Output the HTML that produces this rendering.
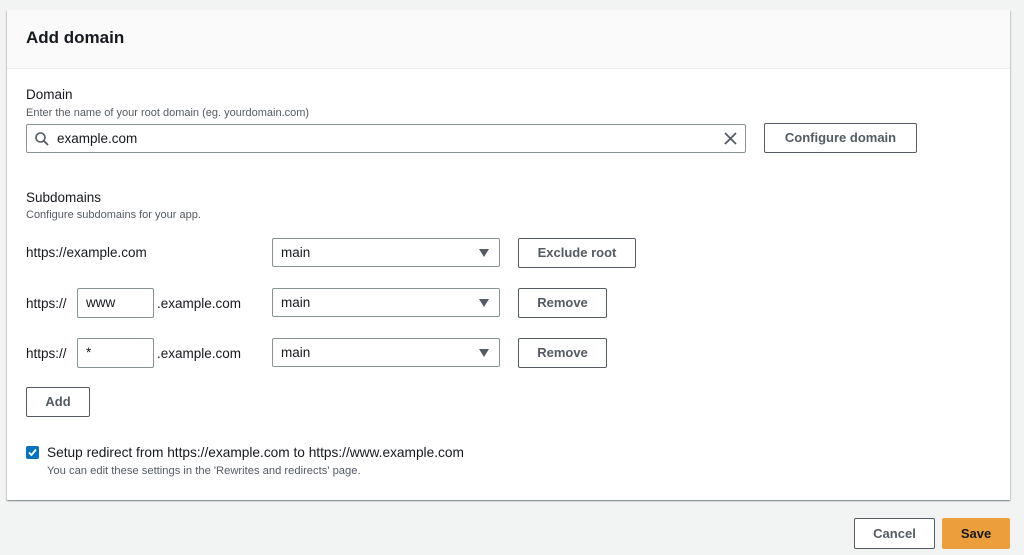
<!DOCTYPE html>
<html><head><style>
*{box-sizing:border-box;margin:0;padding:0}
body{width:1024px;height:555px;background:#f2f3f3;font-family:"Liberation Sans",Arial,sans-serif;color:#16191f;position:relative;overflow:hidden}
.card{position:absolute;left:7px;top:10px;width:1003px;height:490px;background:#fff;box-shadow:0 1px 1px 0 rgba(0,28,36,.3),1px 1px 1px 0 rgba(0,28,36,.15),-1px 1px 1px 0 rgba(0,28,36,.15)}
.hdr{height:59px;background:#fafafa;border-bottom:1px solid #eaeded;padding:18px 19px;font-size:17px;font-weight:bold}
.a{position:absolute}
.lbl{font-size:13.5px}
.desc{font-size:11px;color:#545b64}
.inp{position:absolute;border:1px solid #879596;border-radius:2px;height:29px;font-size:13.5px;padding:6px 8px;background:#fff}
.btn{position:absolute;border:1px solid #545b64;border-radius:2px;height:30px;font-size:13px;font-weight:bold;color:#545b64;text-align:center;line-height:28px;background:#fff}
.sel::after{content:"";position:absolute;right:10px;top:10px;border-left:5px solid transparent;border-right:5px solid transparent;border-top:8px solid #545b64}
.txt{font-size:13.5px}
</style></head><body>
<div class="card">
<div class="hdr">Add domain</div>
<div class="a lbl" style="left:19px;top:77px">Domain</div>
<div class="a desc" style="left:19px;top:97px">Enter the name of your root domain (eg. yourdomain.com)</div>
<div class="inp" style="left:19px;top:114px;width:720px;padding-left:30px">example.com
<svg class="a" style="left:8px;top:7px" width="14" height="14" viewBox="0 0 14 14"><circle cx="5.5" cy="5.5" r="4.5" fill="none" stroke="#545b64" stroke-width="1.6"/><line x1="9" y1="9" x2="13" y2="13" stroke="#545b64" stroke-width="1.8"/></svg>
<svg class="a" style="right:8px;top:7px" width="13" height="13" viewBox="0 0 13 13"><path d="M1 1L12 12M12 1L1 12" stroke="#545b64" stroke-width="1.8"/></svg></div>
<div class="btn" style="left:757px;top:113px;width:153px">Configure domain</div>
<div class="a lbl" style="left:19px;top:180px">Subdomains</div>
<div class="a desc" style="left:19px;top:199px">Configure subdomains for your app.</div>

<div class="a txt" style="left:19px;top:235px">https://example.com</div>
<div class="inp sel" style="left:265px;top:228px;width:228px">main</div>
<div class="btn" style="left:511px;top:228px;width:118px">Exclude root</div>

<div class="a txt" style="left:19px;top:286px">https://</div>
<div class="inp" style="left:70px;top:278px;width:77px;height:30px">www</div>
<div class="a txt" style="left:150px;top:286px">.example.com</div>
<div class="inp sel" style="left:265px;top:278px;width:228px">main</div>
<div class="btn" style="left:511px;top:278px;width:89px">Remove</div>

<div class="a txt" style="left:19px;top:336px">https://</div>
<div class="inp" style="left:70px;top:328px;width:77px;height:30px">*</div>
<div class="a txt" style="left:150px;top:336px">.example.com</div>
<div class="inp sel" style="left:265px;top:328px;width:228px">main</div>
<div class="btn" style="left:511px;top:328px;width:89px">Remove</div>

<div class="btn" style="left:19px;top:377px;width:64px">Add</div>

<div class="a" style="left:19px;top:436px;width:13px;height:13px;background:#0073bb;border-radius:2px"><svg width="13" height="13" viewBox="0 0 13 13"><path d="M3 6.5L5.5 9L10 3.5" stroke="#fff" stroke-width="1.8" fill="none"/></svg></div>
<div class="a txt" style="left:40px;top:435px;font-size:13.7px">Setup redirect from https://example.com to https://www.example.com</div>
<div class="a desc" style="left:40px;top:455px;font-size:11.2px">You can edit these settings in the 'Rewrites and redirects' page.</div>
</div>
<div class="btn" style="left:854px;top:518px;width:81px;height:31px;line-height:29px">Cancel</div>
<div class="btn" style="left:942px;top:518px;width:68px;height:31px;line-height:29px;background:#ec9e3c;border-color:#ec9e3c;color:#16191f">Save</div>
</body></html>
